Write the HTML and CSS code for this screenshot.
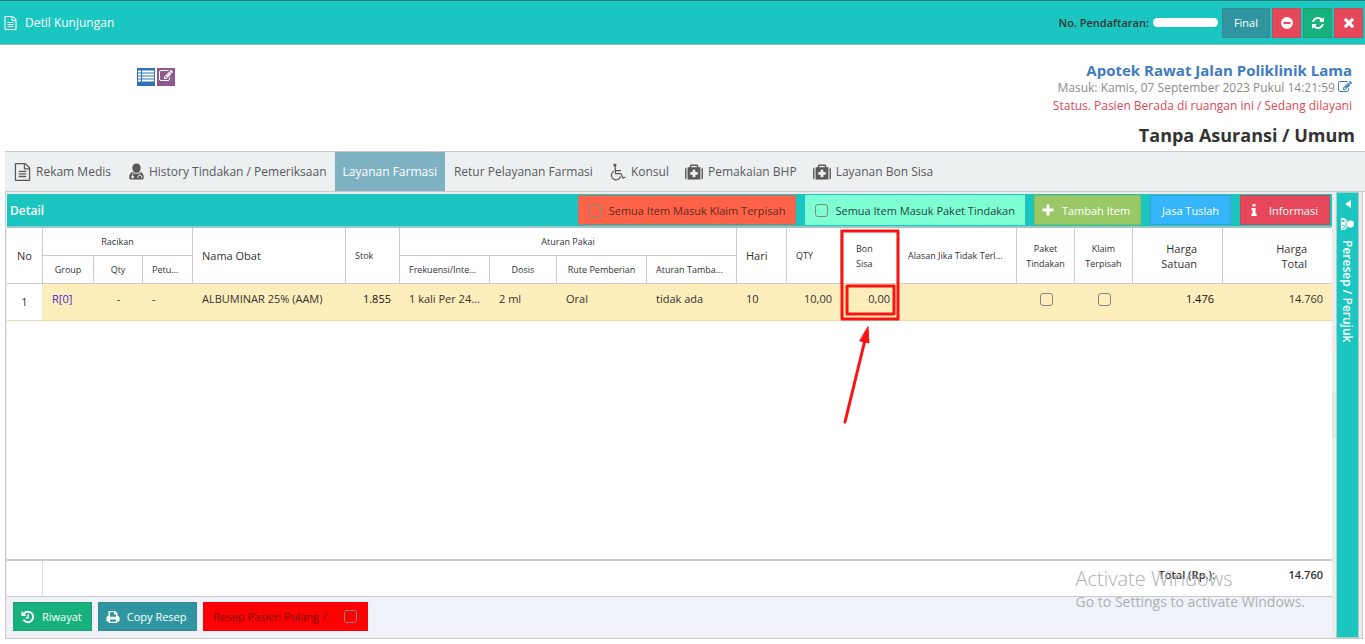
FILE: index.html
```html
<!DOCTYPE html>
<html lang="id">
<head>
<meta charset="utf-8">
<title>Detil Kunjungan</title>
<link rel="stylesheet" href="styles.css">
</head>
<body>
<svg class="sprite" aria-hidden="true">
  <symbol id="i-file" viewBox="0 0 1536 1792"><path d="M1468 380q28 28 48 76t20 88v1152q0 40-28 68t-68 28h-1344q-40 0-68-28t-28-68v-1600q0-40 28-68t68-28h896q40 0 88 20t76 48zm-444-244v376h376q-10-29-22-41l-313-313q-12-12-41-22zm384 1528v-1024h-416q-40 0-68-28t-28-68v-416h-768v1536h1280zm-1024-864q0-14 9-23t23-9h704q14 0 23 9t9 23v64q0 14-9 23t-23 9h-704q-14 0-23-9t-9-23v-64zm736 224q14 0 23 9t9 23v64q0 14-9 23t-23 9h-704q-14 0-23-9t-9-23v-64q0-14 9-23t23-9h704zm0 256q14 0 23 9t9 23v64q0 14-9 23t-23 9h-704q-14 0-23-9t-9-23v-64q0-14 9-23t23-9h704z"/></symbol>
  <symbol id="i-edit" viewBox="0 0 1792 1792"><path d="M888 1184l116-116-152-152-116 116v56h96v96h56zm440-720q-16-16-33 1l-350 350q-17 17-1 33t33-1l350-350q17-17 1-33zm80 594v190q0 119-84.500 203.500t-203.500 84.500h-832q-119 0-203.500-84.500t-84.500-203.500v-832q0-119 84.500-203.500t203.500-84.500h832q63 0 117 25 15 7 18 23 3 17-9 29l-49 49q-14 14-32 8-23-6-45-6h-832q-66 0-113 47t-47 113v832q0 66 47 113t113 47h832q66 0 113-47t47-113v-126q0-13 9-22l64-64q15-15 35-7t20 29zm-96-738l288 288-672 672h-288v-288zm444 132l-92 92-288-288 92-92q28-28 68-28t68 28l152 152q28 28 28 68t-28 68z"/></symbol>
  <symbol id="i-refresh" viewBox="0 0 1792 1792"><path d="M1639 1056q0 5-1 7-64 268-268 434.500t-478 166.500q-146 0-282.500-55t-243.500-157l-129 129q-19 19-45 19t-45-19-19-45v-448q0-26 19-45t45-19h448q26 0 45 19t19 45-19 45l-137 137q71 66 161 102t187 36q134 0 250-65t186-179q11-17 53-117 8-23 30-23h192q13 0 22.500 9.500t9.500 22.500zm25-800v448q0 26-19 45t-45 19h-448q-26 0-45-19t-19-45 19-45l138-138q-148-137-349-137-134 0-250 65t-186 179q-11 17-53 117-8 23-30 23h-199q-13 0-22.500-9.500t-9.500-22.500v-7q65-268 270-434.500t480-166.500q146 0 284 55.500t245 156.500l130-129q19-19 45-19t45 19 19 45z"/></symbol>
  <symbol id="i-minus" viewBox="0 0 14 14"><path fill-rule="evenodd" d="M7 1a6 6 0 1 0 0 12A6 6 0 0 0 7 1zM3.500 6h7v2h-7z"/></symbol>
  <symbol id="i-times" viewBox="0 0 14 14"><path d="M4 1.800 7 4.800 10 1.800 12.200 4 9.200 7 12.200 10 10 12.200 7 9.200 4 12.200 1.800 10 4.800 7 1.800 4z"/></symbol>
  <symbol id="i-list" viewBox="0 0 16 13"><path d="M0 1h3v2H0zm4 0h12v2H4zM0 4h3v2H0zm4 0h12v2H4zM0 7h3v2H0zm4 0h12v2H4zM0 10h3v2H0zm4 0h12v2H4z"/></symbol>
  <symbol id="i-doctor" viewBox="0 0 16 18"><path fill-rule="evenodd" d="M8 .5c3 0 4.400 1.900 4.400 4.700 0 3-1.900 5.300-4.400 5.300S3.600 8.200 3.600 5.200C3.600 2.400 5 .5 8 .5zM4 9.500C5 10.800 6.400 11.500 8 11.500s3-.7 4-2c2.700.6 3.700 3 3.700 5.800 0 1.400-.9 2.200-2.200 2.200h-11C1.200 17.500.3 16.700.3 15.300.3 12.500 1.300 10.100 4 9.500zM3.400 11v2.600a1.400 1.400 0 1 0 1 0V11zM11.100 11v1.700C9.600 13 9 13.800 9 15v1h1v-1c0-.9.600-1.400 1.500-1.400s1.600.5 1.600 1.400v1h1v-1c0-1.300-.8-2.100-2-2.300V11z"/></symbol>
  <symbol id="i-wheelchair" viewBox="0 0 18 18"><path fill="none" stroke="currentColor" stroke-width="1.300" stroke-linecap="round" stroke-linejoin="round" d="M6.500 3.500 7 10.800h5.700l2.200 4.700 2-.9M7 7.500h5M5 8.200a4.900 4.900 0 1 0 7 6"/><circle cx="6.300" cy="1.700" r="1.700"/></symbol>
  <symbol id="i-medkit" viewBox="0 0 19 17"><path fill-rule="evenodd" d="M0 6q0-2 1.500-2.300v12.800Q0 16 0 14.500zM17.500 3.700Q19 4 19 6v8.500q0 1.500-1.500 2zM2.700 3.500H5V2q0-1.500 1.500-1.500h6Q14 .5 14 2v1.500h2.300v13H2.700zM6.500 2v1.500h6V2zM8 6v2.500H5.500v3H8V14h3v-2.500h2.500v-3H11V6z"/></symbol>
  <symbol id="i-plus" viewBox="0 0 12 12"><path d="M4.500.5h3v4h4v3h-4v4h-3v-4h-4v-3h4z"/></symbol>
  <symbol id="i-info" viewBox="0 0 6 12"><path d="M1.500 0h3v2.500h-3zM.5 4h4v5.800h1.200V12H.3V9.800h1.200V6H.5z"/></symbol>
  <symbol id="i-history" viewBox="0 0 14 14"><path fill="none" stroke="currentColor" stroke-width="2" d="M3 3.500a5.200 5.200 0 1 1-.5 6.200"/><path d="M.5 1v5h5zM6.500 4h1.400v4.600H4.600V7.300h1.900z"/></symbol>
  <symbol id="i-print" viewBox="0 0 14 14"><path fill-rule="evenodd" d="M2.500 6V1h6.700L11.500 3.300V6q2 0 2 2v3.500h-2.200V13H2.700v-1.500H.5V8q0-2 2-2zM4 2.300v4.500h6V4.500H8V2.300zM4 9.500v2.300h6V9.500z"/></symbol>
  <symbol id="i-caret" viewBox="0 0 6 8"><path d="M6 0v8L0 4z"/></symbol>
</svg>

<header class="topbar">
  <h1 class="topbar-title"><svg class="icon-file-sm"><use href="#i-file"/></svg>Detil Kunjungan</h1>
  <div class="topbar-actions">
    <span class="reg-label">No. Pendaftaran:</span>
    <span class="reg-value"></span>
    <button class="btn btn-teal">Final</button>
    <button class="btn btn-icon btn-red" aria-label="Batal"><svg><use href="#i-minus"/></svg></button>
    <button class="btn btn-icon btn-green" aria-label="Muat ulang"><svg><use href="#i-refresh"/></svg></button>
    <button class="btn btn-icon btn-red" aria-label="Tutup"><svg><use href="#i-times"/></svg></button>
  </div>
</header>

<section class="visit">
  <div class="visit-tools">
    <button class="mini mini-blue" aria-label="Daftar"><svg><use href="#i-list"/></svg></button>
    <button class="mini mini-purple" aria-label="Ubah"><svg><use href="#i-edit"/></svg></button>
  </div>
  <div class="visit-info">
    <div class="visit-unit">Apotek Rawat Jalan Poliklinik Lama</div>
    <div class="visit-date">Masuk: Kamis, 07 September 2023 Pukul 14:21:59 <a href="#" aria-label="Ubah tanggal"><svg><use href="#i-edit"/></svg></a></div>
    <div class="visit-status">Status. Pasien Berada di ruangan ini / Sedang dilayani</div>
    <div class="visit-payer">Tanpa Asuransi / Umum</div>
  </div>
</section>

<nav class="tabs">
  <a class="tab" href="#"><svg class="ic-file"><use href="#i-file"/></svg>Rekam Medis</a>
  <a class="tab" href="#"><svg class="ic-doc"><use href="#i-doctor"/></svg>History Tindakan / Pemeriksaan</a>
  <a class="tab active" href="#">Layanan Farmasi</a>
  <a class="tab" href="#">Retur Pelayanan Farmasi</a>
  <a class="tab" href="#"><svg class="ic-chair"><use href="#i-wheelchair"/></svg>Konsul</a>
  <a class="tab" href="#"><svg class="ic-kit"><use href="#i-medkit"/></svg>Pemakaian BHP</a>
  <a class="tab" href="#"><svg class="ic-kit"><use href="#i-medkit"/></svg>Layanan Bon Sisa</a>
</nav>

<main class="workspace">
  <section class="grid-panel">
    <div class="grid-title">
      <h2>Detail</h2>
      <label class="flag flag-orange"><input type="checkbox">Semua Item Masuk Klaim Terpisah</label>
      <label class="flag flag-mint"><input type="checkbox">Semua Item Masuk Paket Tindakan</label>
      <button class="btn btn-lime"><svg class="ic-12"><use href="#i-plus"/></svg>Tambah Item</button>
      <button class="btn btn-sky">Jasa Tuslah</button>
      <button class="btn btn-red"><svg class="ic-info"><use href="#i-info"/></svg>Informasi</button>
    </div>
    <div class="grid-body">
      <table class="grid">
        <colgroup>
          <col class="w-no"><col class="w-group"><col class="w-qty1"><col class="w-petugas"><col><col class="w-stok">
          <col class="w-90"><col class="w-dosis"><col class="w-90"><col class="w-90"><col class="w-hari"><col class="w-qty">
          <col class="w-bon"><col class="w-alasan"><col class="w-check"><col class="w-check"><col class="w-90"><col class="w-total">
        </colgroup>
        <thead>
          <tr>
            <th rowspan="2" class="big center no">No</th>
            <th colspan="3" class="center group">Racikan</th>
            <th rowspan="2" class="big">Nama Obat</th>
            <th rowspan="2">Stok</th>
            <th colspan="4" class="center group">Aturan Pakai</th>
            <th rowspan="2" class="big">Hari</th>
            <th rowspan="2">QTY</th>
            <th rowspan="2" class="marked">Bon<br>Sisa
              <svg class="marker" viewBox="0 0 64 200" aria-hidden="true">
                <rect x="3" y="3" width="56" height="88"/><rect x="8" y="58" width="47" height="28"/>
                <path d="M6 194 26 112"/><path class="head" d="M29 99 30 115 21 113z"/>
              </svg>
            </th>
            <th rowspan="2">Alasan Jika Tidak Terl...</th>
            <th rowspan="2" class="center">Paket<br>Tindakan</th>
            <th rowspan="2" class="center">Klaim<br>Terpisah</th>
            <th rowspan="2" class="big right unit">Harga<br>Satuan</th>
            <th rowspan="2" class="big right sum">Harga<br>Total</th>
          </tr>
          <tr>
            <th class="center">Group</th><th class="center">Qty</th><th>Petu...</th>
            <th>Frekuensi/Inte...</th><th class="center">Dosis</th><th class="center">Rute Pemberian</th><th>Aturan Tamba...</th>
          </tr>
        </thead>
        <tbody>
          <tr>
            <td class="center no">1</td>
            <td><a href="#">R[0]</a></td>
            <td class="center">-</td>
            <td>-</td>
            <td>ALBUMINAR 25% (AAM)</td>
            <td class="right strong">1.855</td>
            <td>1 kali Per 24...</td>
            <td>2 ml</td>
            <td>Oral</td>
            <td>tidak ada</td>
            <td>10</td>
            <td class="right">10,00</td>
            <td class="right">0,00</td>
            <td></td>
            <td class="center"><input type="checkbox" aria-label="Paket Tindakan"></td>
            <td class="center"><input type="checkbox" aria-label="Klaim Terpisah"></td>
            <td class="right strong">1.476</td>
            <td class="right">14.760</td>
          </tr>
        </tbody>
      </table>
    </div>
    <div class="grid-total">
      <span class="total-gutter"></span>
      <span class="total-label">Total (Rp.):</span>
      <span class="total-value">14.760</span>
    </div>
    <div class="grid-tools">
      <button class="btn btn-green"><svg class="ic-14"><use href="#i-history"/></svg>Riwayat</button>
      <button class="btn btn-teal"><svg class="ic-14"><use href="#i-print"/></svg>Copy Resep</button>
      <label class="flag flag-red">Resep Pasien Pulang ?:<input type="checkbox"></label>
    </div>
  </section>
  <div class="splitter"><span class="grip"></span></div>
  <aside class="side">
    <svg class="ic-caret"><use href="#i-caret"/></svg>
    <svg class="ic-side"><use href="#i-doctor"/></svg>
    <span>Peresep / Perujuk</span>
  </aside>
</main>

<div class="watermark" aria-hidden="true">
  <div class="wm-title">Activate Windows</div>
  <div class="wm-text">Go to Settings to activate Windows.</div>
</div>
</body>
</html>
```
FILE: styles.css
```css
* { box-sizing: border-box; }
html { height: 100%; }
body {
  margin: 0;
  min-height: 100%;
  display: flex;
  flex-direction: column;
  padding-bottom: 5px;
  background: #fff;
  color: #333;
  font: 12px/15px "Open Sans", sans-serif;
  position: relative;
}
.sprite { display: none; }
svg { fill: currentColor; flex: none; }
button, input { font: inherit; margin: 0; }

.topbar {
  display: flex;
  justify-content: space-between;
  align-items: center;
  height: 45px;
  padding: 0 2px 0 4px;
  background: #1bc6c0;
  border-top: 1px solid #237a78;
  border-bottom: 1px solid #8fbfbd;
}
.topbar-title { display: flex; align-items: center; gap: 8px; margin: 0; font-size: 12px; font-weight: 500; color: #fff; }
.icon-file-sm { width: 13px; height: 14px; }
.topbar-actions { display: flex; align-items: center; gap: 2px; }
.reg-label { font-size: 11px; font-weight: 600; margin-right: 2px; }
.reg-value { width: 65px; height: 9px; border-radius: 5px; background: #fff; margin-right: 2px; }

.btn {
  display: inline-flex;
  align-items: center;
  justify-content: center;
  gap: 8px;
  height: 30px;
  padding: 0 11px;
  border: 1px solid rgba(90, 90, 90, .25);
  color: #fff;
  font-size: 11px;
  font-weight: 500;
  white-space: nowrap;
}
.btn-icon { width: 29px; padding: 0; }
.btn-icon svg { width: 14px; height: 14px; }
.btn-teal { background: #2f96a1; }
.btn-red { background: #e7475a; }
.btn-green { background: #16b17d; }
.btn-lime { background: #9bc866; border-color: #93bb45; }
.btn-sky { background: #35b5fb; }

.visit { display: flex; justify-content: space-between; height: 106px; padding: 16px 10px 0 137px; }
.visit-tools { display: flex; gap: 2px; padding-top: 7px; }
.mini { width: 18px; height: 18px; padding: 1px; border: 0; color: #fff; display: flex; justify-content: center; }
.mini svg { width: 16px; height: 14px; }
.mini-blue { background: #2d73b8; }
.mini-purple { background: #8c5a8c; }
.visit-info { text-align: right; }
.visit-unit { padding-right: 3px; font-size: 15px; line-height: 18px; font-weight: 700; color: #3f7cbf; }
.visit-date { padding-right: 3px; line-height: 18px; color: #8c8c8c; }
.visit-date a { color: #3f7cbf; }
.visit-date svg { width: 14px; height: 14px; vertical-align: -2px; }
.visit-status { padding-right: 3px; line-height: 18px; color: #dc4a58; }
.visit-payer { margin-top: 7px; font-size: 18px; line-height: 26px; font-weight: 700; }

.tabs {
  display: flex;
  height: 41px;
  margin-left: 5px;
  background: #ecf0f0;
  border-top: 1px solid #ccc;
  border-bottom: 1px solid #ccc;
}
.tab { display: flex; align-items: center; gap: 5px; padding: 0 8px; color: #58595b; text-decoration: none; white-space: nowrap; }
.tab:first-child { padding: 0 10px 0 9px; }
.tab.active { background: #7eb1c1; color: #fff; }
.tab.active + .tab { padding-left: 9px; }
.ic-file { width: 17px; height: 18px; }
.ic-doc { width: 15px; height: 17px; }
.ic-chair { width: 17px; height: 18px; }
.ic-kit { width: 18px; height: 16px; }

.workspace { flex: 1; display: flex; margin: 0 2px 0 5px; border: 1px solid #ccc; border-top: 0; background: #ececec; }
.grid-panel { flex: 1; min-width: 0; display: flex; flex-direction: column; padding: 2px 0 0 1px; }
.grid-title {
  display: flex;
  align-items: center;
  gap: 9px;
  height: 34px;
  padding: 0 2px 0 3px;
  background: #1bc6c0;
  border-bottom: 2px solid #9fc6c6;
}
.grid-title h2 { flex: 1; margin: 0; font-size: 12px; font-weight: 600; color: #fff; }
.flag { display: flex; align-items: center; gap: 7px; height: 30px; padding: 0 10px; font-size: 11px; font-weight: 500; white-space: nowrap; }
.flag-orange { background: #ff6347; border: 1px solid #b9756a; color: #5b2a22; }
.flag-mint { background: #7fffd4; color: #24463d; }
.flag-red { gap: 15px; height: 29px; padding: 0 11px; background: #f00; color: #6b1111; }

input[type="checkbox"] {
  appearance: none;
  width: 13px;
  height: 13px;
  border: 1px solid #858585;
  border-radius: 3px;
  background: transparent;
}
.ic-12 { width: 12px; height: 12px; }
.ic-14 { width: 14px; height: 14px; }
.ic-info { width: 6px; height: 12px; margin-right: 4px; }
.btn-lime { padding: 0 10px 0 7px; }
.grid-title .btn-red { padding: 0 11px 0 10px; }

.grid-body { flex: 1; background: #fff; border-bottom: 2px solid #ccc; }
.grid { width: 100%; table-layout: fixed; border-collapse: separate; border-spacing: 0; }
.w-no { width: 36px; }
.w-group { width: 51px; }
.w-qty1 { width: 49px; }
.w-petugas { width: 50px; }
.w-stok { width: 54px; }
.w-dosis { width: 67px; }
.w-90 { width: 90px; }
.w-hari { width: 50px; }
.w-qty { width: 54px; }
.w-bon { width: 58px; }
.w-alasan { width: 118px; }
.w-check { width: 58px; }
.w-total { width: 109px; }
.grid th {
  height: 28px;
  padding: 0 4px 0 9px;
  border-right: 1px solid #ccc;
  border-bottom: 1px solid #ccc;
  font-size: 9px;
  font-weight: 400;
  text-align: left;
  white-space: nowrap;
}
.grid th.big { font-size: 11px; }
.grid th.center, .grid td.center { padding: 0; text-align: center; }
.grid th.right { text-align: right; }
.grid th.unit { padding-right: 25px; }
.grid th.sum { padding-right: 25px; border-right: 0; }
.grid th.marked { position: relative; padding-left: 15px; }
.grid td {
  height: 37px;
  padding: 0 9px 8px;
  background: #feeebb;
  border-bottom: 1px solid #ecdcae;
  font-size: 11px;
  color: #333;
  white-space: nowrap;
}
.grid td.center { padding-bottom: 8px; }
.grid td.no { padding-bottom: 2px; background: #fff; border-right: 1px solid #e5e5e5; }
.grid td.right { text-align: right; }
.grid td.strong { font-weight: 500; color: #111; }
.grid td a { color: #4a1fd0; text-decoration: none; }
.grid td input { vertical-align: middle; }
.marker { position: absolute; left: -2px; top: 0; width: 64px; height: 200px; z-index: 1; pointer-events: none; }
.marker rect, .marker path { fill: none; stroke: #fb1212; stroke-width: 3; stroke-linejoin: round; stroke-linecap: round; }
.marker .head { fill: #fb1212; stroke-width: 1; }

.grid-total { display: flex; height: 36px; background: #fff; border-bottom: 1px solid #ccc; font-size: 11px; font-weight: 600; }
.total-gutter { width: 36px; border-right: 1px solid #e0e0e0; }
.total-label { flex: 1; padding: 6px 0; text-align: right; }
.total-value { width: 117px; padding: 6px 9px; text-align: right; }
.grid-tools { display: flex; gap: 6px; height: 41px; padding: 5px 6px; background: #eff2f8; }
.grid-tools .btn { gap: 7px; height: 29px; padding: 0 9px 0 7px; }

.splitter { width: 5px; display: flex; align-items: center; }
.grip { width: 5px; height: 44px; border: 1px solid #ddd; background: #e6e6e6; }
.side {
  width: 21px;
  display: flex;
  flex-direction: column;
  align-items: center;
  gap: 9px;
  padding-top: 7px;
  margin: 1px 4px 1px 0;
  background: #1bc6c0;
  color: #fff;
  outline: 1px solid #a9cfcd;
}
.side span { writing-mode: vertical-rl; font-weight: 600; }
.ic-caret { width: 6px; height: 8px; }
.ic-side { width: 13px; height: 14px; transform: rotate(90deg); }

.watermark { position: absolute; right: 60px; bottom: 32px; color: #aeb0b3; pointer-events: none; }
.wm-title { font-size: 20px; line-height: 26px; font-weight: 300; }
.wm-text { font-size: 14px; line-height: 20px; }
```
